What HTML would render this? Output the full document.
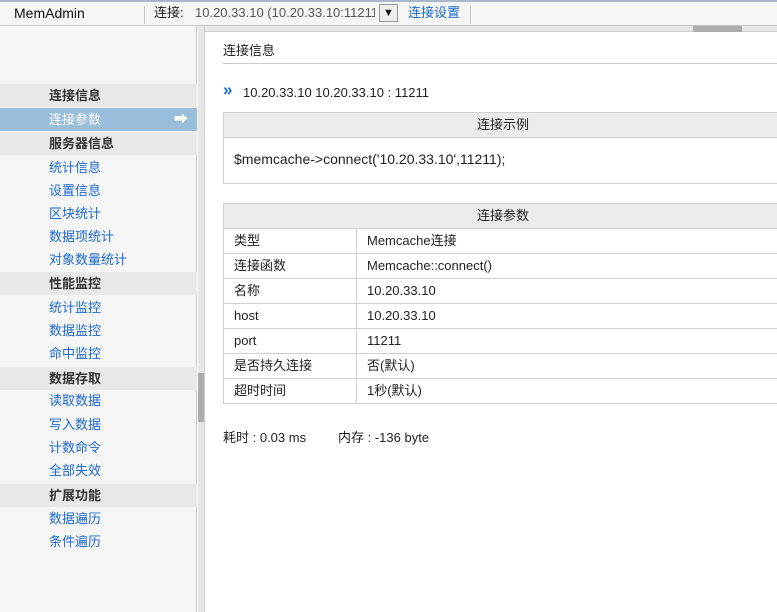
<!DOCTYPE html>
<html><head><meta charset="utf-8"><style>
*{margin:0;padding:0;box-sizing:border-box}
body{width:777px;height:612px;overflow:hidden;background:#fff;font-family:"Liberation Sans","Noto Sans CJK SC",sans-serif;font-size:13px;line-height:16px;color:#222;position:relative}
.top{position:absolute;left:0;top:0;width:777px;height:26px;background:#f5f5f5;border-top:2px solid #a9b7cb;border-bottom:1px solid #c8c8c8}
.abs{position:absolute;white-space:nowrap;line-height:16px}
.sep{position:absolute;top:4px;width:1px;height:18px;background:#c4c4c4}
.side{position:absolute;left:0;top:26px;width:197px;height:586px;background:#f5f5f5;border-right:1px solid #c8c8c8}
.track{position:absolute;left:198px;top:26px;width:7px;height:586px;background:#e6e6e6;border-right:1px solid #d0d0d0}
.thumb{position:absolute;left:198px;top:373px;width:6px;height:49px;background:#acacac}
.row{position:absolute;left:0;width:197px;height:23.4px;line-height:23.4px;padding-left:49px}
.cat{background:#e8e8e8;font-weight:bold;color:#333}
.lnk{color:#1d6ad0}
.sel{background:#98bedc;color:#fff}
table{border-collapse:collapse;position:absolute;left:223px;width:560px}
td{border:1px solid #d0d0d0;height:25px;padding-left:10px;line-height:16px;padding-top:0;padding-bottom:1px}
th{border:1px solid #d0d0d0;background:#ebebeb;font-weight:normal;height:25px;line-height:16px;padding-bottom:1px}
</style></head><body>
<div class="top">
<div class="abs" style="left:14px;top:3px;font-size:14px;color:#111">MemAdmin</div>
<div class="sep" style="left:144px"></div>
<div class="abs" style="left:154px;top:3px;color:#222">连接:</div>
<div class="abs" style="left:195px;top:3px;color:#555;width:180px;overflow:hidden">10.20.33.10 (10.20.33.10:11211)</div>
<div class="abs" style="left:379px;top:2px;width:19px;height:18px;border:1px solid #999;background:#eee;font-size:11px;text-align:center;line-height:16px;color:#111">▼</div>
<div class="abs" style="left:408px;top:3px;color:#1d6ad0">连接设置</div>
<div class="sep" style="left:470px"></div>
</div>
<div class="abs" style="left:205px;top:26px;width:572px;height:6px;background:#e6e6e6;border-bottom:1px solid #ccc"></div>
<div class="abs" style="left:693px;top:26px;width:49px;height:6px;background:#acacac"></div>
<div class="side">
<div class="row cat" style="top:57.5px">连接信息</div>
<div class="row sel" style="top:81.5px">连接参数<span style="position:absolute;left:174px;font-size:14px">➡</span></div>
<div class="row cat" style="top:105.5px">服务器信息</div>
<div class="row lnk" style="top:130px">统计信息</div>
<div class="row lnk" style="top:152.5px">设置信息</div>
<div class="row lnk" style="top:176px">区块统计</div>
<div class="row lnk" style="top:199px">数据项统计</div>
<div class="row lnk" style="top:221.5px">对象数量统计</div>
<div class="row cat" style="top:245.5px">性能监控</div>
<div class="row lnk" style="top:270px">统计监控</div>
<div class="row lnk" style="top:292.5px">数据监控</div>
<div class="row lnk" style="top:315.5px">命中监控</div>
<div class="row cat" style="top:340.5px">数据存取</div>
<div class="row lnk" style="top:363px">读取数据</div>
<div class="row lnk" style="top:386.5px">写入数据</div>
<div class="row lnk" style="top:410px">计数命令</div>
<div class="row lnk" style="top:432.5px">全部失效</div>
<div class="row cat" style="top:457.5px">扩展功能</div>
<div class="row lnk" style="top:481px">数据遍历</div>
<div class="row lnk" style="top:504px">条件遍历</div>
</div>
<div class="track"></div><div class="thumb"></div>
<div class="abs" style="left:223px;top:43px">连接信息</div>
<div class="abs" style="left:223px;top:63px;width:560px;height:1px;background:#ccc"></div>
<div class="abs" style="left:223px;top:81px;color:#1d6ad0;font-weight:bold;font-size:17px;line-height:18px">»</div>
<div class="abs" style="left:243px;top:85px">10.20.33.10 10.20.33.10 : 11211</div>
<table style="top:112px">
<tr><th>连接示例</th></tr>
<tr><td style="height:46px;font-size:14px;padding-bottom:3px">$memcache-&gt;connect('10.20.33.10',11211);</td></tr>
</table>
<table style="top:203px">
<tr><th colspan="2">连接参数</th></tr>
<tr><td style="width:133px">类型</td><td>Memcache连接</td></tr>
<tr><td>连接函数</td><td>Memcache::connect()</td></tr>
<tr><td>名称</td><td>10.20.33.10</td></tr>
<tr><td>host</td><td>10.20.33.10</td></tr>
<tr><td>port</td><td>11211</td></tr>
<tr><td>是否持久连接</td><td>否(默认)</td></tr>
<tr><td>超时时间</td><td>1秒(默认)</td></tr>
</table>
<div class="abs" style="left:223px;top:430px">耗时 : 0.03 ms</div>
<div class="abs" style="left:338px;top:430px">内存 : -136 byte</div>
</body></html>
